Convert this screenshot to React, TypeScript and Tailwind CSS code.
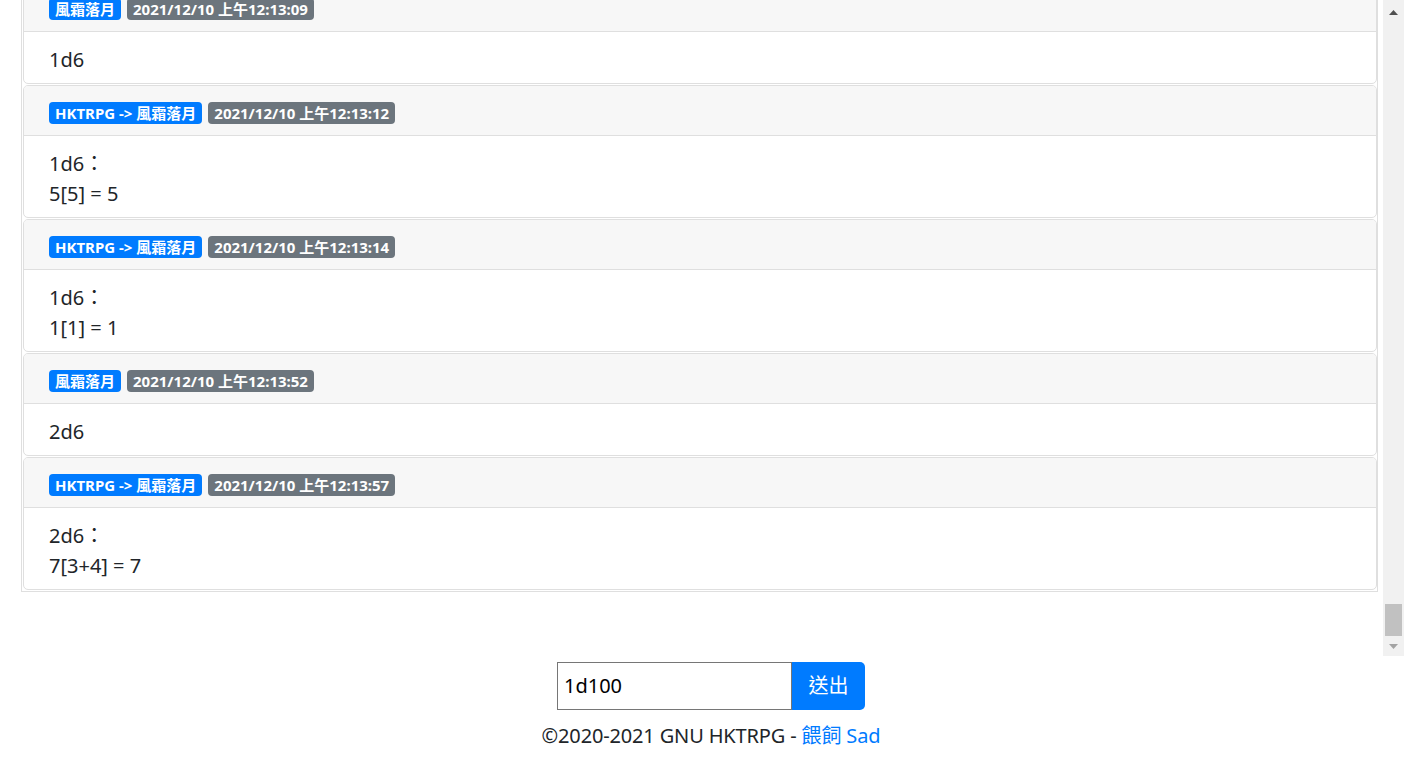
import React from "react";

type Msg = { from: string; time: string; lines: string[] };

const msgs: Msg[] = [
  { from: "風霜落月", time: "2021/12/10 上午12:13:09", lines: ["1d6"] },
  { from: "HKTRPG -> 風霜落月", time: "2021/12/10 上午12:13:12", lines: ["1d6：", "5[5] = 5"] },
  { from: "HKTRPG -> 風霜落月", time: "2021/12/10 上午12:13:14", lines: ["1d6：", "1[1] = 1"] },
  { from: "風霜落月", time: "2021/12/10 上午12:13:52", lines: ["2d6"] },
  { from: "HKTRPG -> 風霜落月", time: "2021/12/10 上午12:13:57", lines: ["2d6：", "7[3+4] = 7"] },
];

const font = { fontFamily: '"Noto Sans", "Noto Sans CJK TC", sans-serif' };

function Card({ m }: { m: Msg }) {
  return (
    <div className="border border-[#dfdfdf] rounded-[5px] bg-white overflow-hidden">
      <div className="bg-[#f7f7f7] border-b border-[#dfdfdf] pt-[16px] pb-[11px] px-[25px] flex items-center gap-[6px]">
        <span className="h-[22px] px-[6px] rounded-[4px] bg-[#007bff] text-white text-[15px] font-bold leading-[22px] whitespace-nowrap">
          {m.from}
        </span>
        <span className="h-[22px] px-[6px] rounded-[4px] bg-[#6c757d] text-white text-[15px] font-bold leading-[22px] whitespace-nowrap">
          {m.time}
        </span>
      </div>
      <div className="px-[25px] pt-[13px] pb-[8px] text-[20px] leading-[30px] text-[#212529]">
        {m.lines.map((l, i) => (
          <div key={i}>{l}</div>
        ))}
      </div>
    </div>
  );
}

export default function App() {
  return (
    <div className="w-[1422px] h-[758px] bg-white overflow-hidden" style={font}>
      <div className="flex h-[656px] ml-[21px] w-[1383px]">
        <div className="w-[1362px] h-full overflow-hidden flex flex-col justify-end pb-[64px]">
          <div className="w-[1357px] border border-t-0 border-[#dfdfdf] pl-[1px] pb-[1px] flex flex-col gap-[1px] shrink-0">
            {msgs.map((m, i) => (
              <Card key={i} m={m} />
            ))}
          </div>
        </div>
        <div className="w-[21px] h-full bg-[#f1f1f1] flex flex-col items-center">
          <div className="h-[24px] flex items-center justify-center">
            <svg width="9" height="5" viewBox="0 0 9 5">
              <path d="M4.5 0L9 5H0z" fill="#505050" />
            </svg>
          </div>
          <div className="flex-1" />
          <div className="w-[17px] h-[32px] bg-[#c1c1c1]" />
          <div className="h-[20px] flex items-center justify-center">
            <svg width="9" height="5" viewBox="0 0 9 5">
              <path d="M0 0H9L4.5 5z" fill="#a3a3a3" />
            </svg>
          </div>
        </div>
      </div>
      <div className="flex justify-center mt-[6px]">
        <div className="flex">
          <div className="w-[235px] h-[48px] border border-[#767676] flex items-center pl-[6px] text-[20px] text-black">
            1d100
          </div>
          <div className="w-[73px] h-[48px] bg-[#007bff] text-white text-[20px] flex items-center justify-center rounded-r-[5px]">
            送出
          </div>
        </div>
      </div>
      <div className="text-center text-[20px] leading-[30px] text-[#212529] mt-[11px] tracking-[-0.15px]">
        ©2020-2021 GNU HKTRPG - <span className="text-[#007bff]">餵飼 Sad</span>
      </div>
    </div>
  );
}
